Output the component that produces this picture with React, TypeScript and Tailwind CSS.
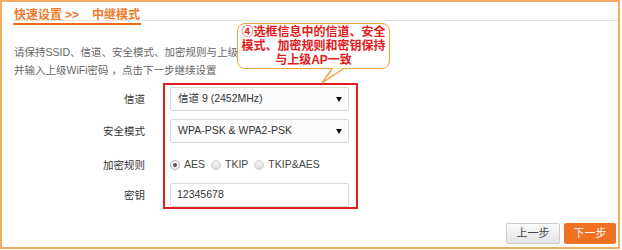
import React from "react";

const font = { fontFamily: '"Liberation Sans", "Noto Sans CJK SC", sans-serif' };

function SelectBox({ value }: { value: string }) {
  return (
    <div className="flex h-[24px] w-[179px] items-center justify-between rounded-[2px] border border-[#d9d9d9] bg-[#fcfcfc] pl-[7px] pr-[5px] text-[10.5px] text-[#333]">
      <span>{value}</span>
      <svg width="6" height="5" viewBox="0 0 6 5" className="mr-[1px]">
        <polygon points="0,0 6,0 3,5" fill="#111" />
      </svg>
    </div>
  );
}

function Radio({ label, checked }: { label: string; checked?: boolean }) {
  return (
    <label className="flex items-center gap-[4px]">
      <span
        className={
          checked
            ? "flex h-[10px] w-[10px] items-center justify-center rounded-full border border-[#b5b5b5] bg-[#f2f2f2]"
            : "h-[10px] w-[10px] rounded-full border border-[#cfcfcf] bg-gradient-to-b from-[#f4f4f4] to-[#dedede]"
        }
      >
        {checked && <span className="h-[4px] w-[4px] rounded-full bg-[#555]" />}
      </span>
      <span>{label}</span>
    </label>
  );
}

export default function App() {
  return (
    <div className="h-[250px] w-[622px] bg-white" style={font}>
      <div className="relative flex h-[249px] w-[620px] flex-col border-2 border-[#f4ac62]">
        {/* header */}
        <div className="ml-[11px] h-[19px] border-b border-[#e3e3e3]">
          <span className="inline-flex h-[18px] items-center border-b-2 border-[#ec6c1c] pl-[1px] pr-[1px] text-[12px] font-bold leading-none text-[#ee7a2e]">
            快速设置<span className="ml-[3px] mr-[13px]">&gt;&gt;</span>中继模式
          </span>
        </div>

        {/* description */}
        <p className="ml-[12px] mt-[22px] text-[10.5px] leading-[18px] text-[#666]">
          请保持SSID、信道、安全模式、加密规则与上级
          <br />
          并输入上级WiFi密码 ，点击下一步继续设置
        </p>

        {/* form */}
        <div className="mt-[4px] flex">
          <div className="flex w-[143px] flex-col pt-[4px] text-right text-[10.5px] text-[#333]">
            <div className="h-[24px] leading-[24px]">信道</div>
            <div className="mt-[8px] h-[24px] leading-[24px]">安全模式</div>
            <div className="mt-[10px] h-[24px] leading-[24px]">加密规则</div>
            <div className="mt-[6px] h-[24px] leading-[24px]">密钥</div>
          </div>
          <div className="ml-[18px] flex w-[195px] flex-col border-2 border-[#e11d24] pl-[5px] pr-[7px] pt-[2px]">
            <SelectBox value="信道 9 (2452MHz)" />
            <div className="mt-[8px]">
              <SelectBox value="WPA-PSK & WPA2-PSK" />
            </div>
            <div className="mt-[10px] flex h-[24px] items-center gap-[6px] text-[10.5px] text-[#444]">
              <Radio label="AES" checked />
              <Radio label="TKIP" />
              <Radio label="TKIP&AES" />
            </div>
            <div className="mt-[6px] flex h-[24px] w-[179px] items-center rounded-[2px] border border-[#d9d9d9] bg-white pl-[6px] text-[10.5px] text-[#333]">
              12345678
            </div>
          </div>
        </div>

        {/* buttons */}
        <div className="mr-[2px] mt-[14px] flex justify-end gap-[4px]">
          <button className="h-[21px] w-[54px] rounded-[2px] border border-[#cdcdcd] bg-gradient-to-b from-[#fafafa] to-[#e4e4e4] text-[11px] text-[#444]">
            上一步
          </button>
          <button className="h-[21px] w-[52px] rounded-[2px] bg-[#f27022] text-[11px] text-white">
            下一步
          </button>
        </div>

        {/* callout */}
        <div className="absolute left-[235px] top-[21px] flex h-[46px] w-[153px] flex-col items-center justify-center rounded-[8px] border-[1.5px] border-[#f0a43c] bg-white text-[12px] font-bold leading-[14px] text-[#e21b1b]">
          <span>④选框信息中的信道、安全</span>
          <span>模式、加密规则和密钥保持</span>
          <span>与上级AP一致</span>
        </div>
        <svg
          className="absolute left-[316px] top-[64px]"
          width="30"
          height="20"
          viewBox="0 0 30 20"
        >
          <polygon points="14,2.2 25,2.2 4,17" fill="#fff" />
          <line x1="14" y1="3" x2="4" y2="17" stroke="#f0a43c" strokeWidth="1.5" />
          <line x1="25" y1="3" x2="4" y2="17" stroke="#f0a43c" strokeWidth="1.5" />
        </svg>
      </div>
    </div>
  );
}
